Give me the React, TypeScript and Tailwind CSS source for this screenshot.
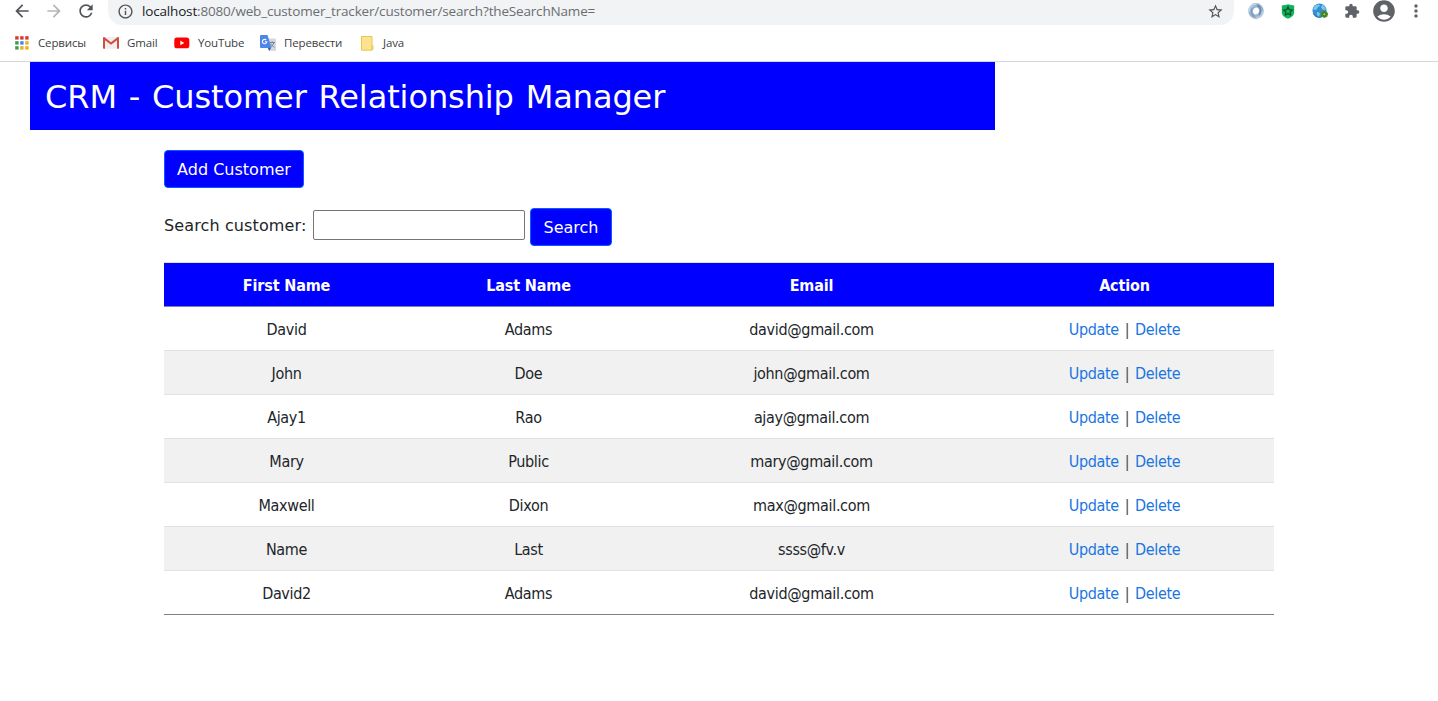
import type { ReactNode } from "react";
import { MdArrowBack, MdArrowForward, MdRefresh, MdInfoOutline, MdStarBorder, MdExtension, MdAccountCircle, MdMoreVert } from "react-icons/md";

type Customer = { first: string; last: string; email: string };

const customers: Customer[] = [
  { first: "David", last: "Adams", email: "david@gmail.com" },
  { first: "John", last: "Doe", email: "john@gmail.com" },
  { first: "Ajay1", last: "Rao", email: "ajay@gmail.com" },
  { first: "Mary", last: "Public", email: "mary@gmail.com" },
  { first: "Maxwell", last: "Dixon", email: "max@gmail.com" },
  { first: "Name", last: "Last", email: "ssss@fv.v" },
  { first: "David2", last: "Adams", email: "david@gmail.com" },
];

function AppsIcon() {
  const colors = ["#d93a34", "#d93a34", "#d93a34", "#34a04f", "#4285f4", "#e9b120", "#34a04f", "#e9b120", "#e9b120"];
  return (
    <svg width="14" height="14" viewBox="0 0 14 14" className="-ml-px">
      {colors.map((c, i) => (
        <rect key={i} x={0.2 + (i % 3) * 5} y={0.2 + Math.floor(i / 3) * 5} width="3.4" height="3.4" fill={c} />
      ))}
    </svg>
  );
}

function GmailIcon() {
  return (
    <svg width="16" height="12" viewBox="0 0 16 12">
      <path d="M1 0h14a1 1 0 0 1 1 1v10a.8.8 0 0 1-.8.8H.8A.8.8 0 0 1 0 11V1a1 1 0 0 1 1-1z" fill="#efefef" />
      <path d="M0 1.2C0 .5.5 0 1.2 0L8 5.300 14.800 0c.7 0 1.200.5 1.200 1.200V11c0 .5-.3.800-.8.800H14V3.200L8 7.800 2 3.200v8.600H.8c-.5 0-.8-.3-.8-.8z" fill="#d54b3d" />
    </svg>
  );
}

function YouTubeIcon() {
  return (
    <svg width="16" height="12" viewBox="0 0 16 12">
      <rect x="0.300" y="0.500" width="15" height="10.800" rx="2.600" fill="#f00" />
      <path d="M6.300 3.600v4.600L10.300 5.900z" fill="#fff" />
    </svg>
  );
}

function TranslateIcon() {
  return (
    <svg width="16" height="16" viewBox="0 0 16 16">
      <path d="M6 3.500h9a1 1 0 0 1 1 1V15a1 1 0 0 1-1 1H9z" fill="#d5d8dc" />
      <path d="M9.500 7.500h5.500M12.200 6.300v1.200M13.800 7.700c-.5 2-2 3.600-3.600 4.400M10.800 8.500c.6 1.600 2 3 3.600 3.700" stroke="#6f7d8c" strokeWidth="0.900" fill="none" />
      <path d="M8 13h3.200L9 16z" fill="#3759a8" />
      <path d="M1 0h6.500L11.500 13H1a1 1 0 0 1-1-1V1a1 1 0 0 1 1-1z" fill="#4b86e8" />
      <path d="M6.200 5A2.200 2.200 0 1 0 6.800 6.700H4.800" stroke="#fff" strokeWidth="1.100" fill="none" />
    </svg>
  );
}

function FolderIcon() {
  return (
    <svg width="13" height="15" viewBox="0 0 13 15">
      <path d="M.5.500h10.500V9.500h1V13l-.8 1.200H.5z" fill="#fde391" stroke="#e6c84f" strokeWidth="1" />
      <path d="M10.500 10v3.500" stroke="#e6c84f" strokeWidth="0.800" />
    </svg>
  );
}

function RingIcon() {
  return (
    <svg width="16" height="16" viewBox="0 0 16 16">
      <ellipse cx="8" cy="8" rx="5.400" ry="5.500" fill="none" stroke="#9db5cf" strokeWidth="4.800" />
      <path d="M1.200 9C.8 4 4 1.200 8.500 1" fill="none" stroke="#c3d3e4" strokeWidth="1.600" />
      <path d="M9 2.200c4 1 4.800 6 2 9.800" fill="none" stroke="#6788ae" strokeWidth="1.500" />
      <path d="M7 13.600C3.500 12.600 2.500 8.500 4.300 5.300" fill="none" stroke="#7c9abc" strokeWidth="1.300" />
      <path d="M14.700 8c0 4-3 6.500-6.500 6.800" fill="none" stroke="#bfd0e3" strokeWidth="1.400" />
      <ellipse cx="8" cy="8" rx="2.400" ry="3.500" transform="rotate(18 8 8)" fill="#fff" />
    </svg>
  );
}

function ShieldIcon() {
  return (
    <svg width="14" height="15" viewBox="0 0 14 15">
      <path d="M.8 1.500C3 1.500 5 1 7 .300c2 .7 4 1.200 6.200 1.200v7c0 3-3 5-6.200 6.200C3.800 13.500.8 11.500.8 8.500z" fill="#12b45b" />
      <path d="M7 3l1.300 2.700 2.900.4-2.100 2 .5 2.900L7 9.600 4.400 11l.5-2.900-2.100-2 2.900-.4z" fill="none" stroke="#0b4f2b" strokeWidth="1.200" />
    </svg>
  );
}

function GlobeIcon() {
  return (
    <svg width="17" height="16" viewBox="0 0 17 16">
      <circle cx="7.500" cy="7.500" r="7" fill="#2f8fd0" />
      <path d="M2 4C4 .8 7 1 8 2.500 7 4 5.500 4 5 6 4 7.500 2 7 1 6zM10 1.500c2 1 3.500 2.500 4 5L11 7 9 4.500zM5 9l3 1-1 4C5 13.500 4.500 11 5 9z" fill="#7cc6ea" />
      <path d="M1.300 10.500C3 14 7 15 9.500 14" fill="none" stroke="#1c5f9d" strokeWidth="1" />
      <path d="M8.500 10l2-2.500 4 .7 1.700 2.600-1 3-3 1.200-3-1.500z" fill="#4d8f2c" />
      <circle cx="12.300" cy="11.300" r="1.600" fill="#a9cf6a" stroke="#2f6a1d" strokeWidth="1" />
    </svg>
  );
}

function Bookmark({ icon, label, className }: { icon: ReactNode; label: string; className: string }) {
  return (
    <div className={`flex shrink-0 items-center ${className}`}>
      <span className="flex w-4 shrink-0 items-center justify-center">{icon}</span>
      <span className="ml-2 whitespace-nowrap tracking-[-0.15px]">{label}</span>
    </div>
  );
}

function BrowserBar() {
  return (
    <header className="h-[62px] border-b border-[#d5d8dc] bg-white font-['Open_Sans',sans-serif]">
      <div className="flex h-[25px] items-start">
        <div className="flex h-[22px] w-[108px] shrink-0 items-center gap-3 pl-3 text-[20px] text-[#505459]">
          <MdArrowBack />
          <MdArrowForward className="text-[#b4b6b8]" />
          <MdRefresh />
        </div>
        <div className="flex h-[25px] w-[1126px] shrink-0 items-start rounded-b-[14px] bg-[#f1f3f4]">
          <div className="flex h-[22px] w-full items-center pl-[9px] pr-[10px]">
            <MdInfoOutline className="text-[17px] text-[#505459]" />
            <span className="ml-2 whitespace-nowrap text-[13.5px] tracking-[-0.17px] text-[#6a6e73]">
              <span className="text-[#202124]">localhost</span>:8080/web_customer_tracker/customer/search?theSearchName=
            </span>
            <MdStarBorder className="ml-auto text-[17px] text-[#505459]" />
          </div>
        </div>
        <div className="flex h-[22px] items-center pl-[14px] text-[#5f6368]">
          <RingIcon />
          <span className="ml-[17px] pt-px"><ShieldIcon /></span>
          <span className="ml-[17px]"><GlobeIcon /></span>
          <MdExtension className="ml-[15px] text-[16px]" />
          <MdAccountCircle className="ml-[11px] text-[26px]" />
          <MdMoreVert className="ml-[9px] text-[20px]" />
        </div>
      </div>
      <nav className="flex h-[36px] items-center pl-[14px] text-[11.5px] text-[#3c4043]">
        <Bookmark icon={<AppsIcon />} label="Сервисы" className="w-[89px]" />
        <Bookmark icon={<GmailIcon />} label="Gmail" className="w-[71px]" />
        <Bookmark icon={<YouTubeIcon />} label="YouTube" className="w-[86px]" />
        <Bookmark icon={<TranslateIcon />} label="Перевести" className="w-[99px]" />
        <Bookmark icon={<FolderIcon />} label="Java" className="w-[60px]" />
      </nav>
    </header>
  );
}

export default function App() {
  return (
    <div className="h-[701px] overflow-hidden bg-white font-['DejaVu_Sans',sans-serif] text-base text-[#212529]">
      <BrowserBar />
      <div className="ml-[30px] flex h-[68px] w-[965px] items-center bg-[#0000ff] px-[15px] pt-0.5">
        <h1 className="text-[32px] leading-[38px] tracking-[-0.1px] [word-spacing:1.8px] text-white">CRM - Customer Relationship Manager</h1>
      </div>
      <main className="mx-auto w-[1110px] pt-5">
        <button className="flex h-[38px] w-[140px] items-center justify-center rounded border border-[#0060ff] bg-[#0000ff] pt-0.5 text-white">
          Add Customer
        </button>
        <form className="mt-5 flex items-start">
          <label htmlFor="search" className="w-[149px] pt-[6px] leading-6 tracking-[0.12px]">Search customer:</label>
          <input id="search" type="text" className="mt-[2px] h-[30px] w-[212px] rounded-[2px] border border-[#767676] bg-white px-1 outline-none" />
          <button type="button" className="ml-[5px] h-[38px] w-[82px] rounded border border-[#0060ff] bg-[#0000ff] pt-0.5 text-white">
            Search
          </button>
        </form>
        <table className="mt-4 w-full table-fixed border-collapse border-b border-[#808080] text-center font-['DejaVu_Sans_Condensed','DejaVu_Sans',sans-serif] tracking-[-0.33px] [font-stretch:condensed]">
          <colgroup>
            <col className="w-[245px]" />
            <col className="w-[239px]" />
            <col className="w-[327px]" />
            <col className="w-[299px]" />
          </colgroup>
          <thead>
            <tr className="h-[44px] border-t border-b border-t-[#dee2e6] border-b-[#8080c0] bg-[#0000ff] tracking-[-0.15px] text-white">
              <th className="pt-0.5">First Name</th>
              <th className="pt-0.5">Last Name</th>
              <th className="pt-0.5">Email</th>
              <th className="pt-0.5">Action</th>
            </tr>
          </thead>
          <tbody>
            {customers.map((c) => (
              <tr key={c.first} className="h-[44px] border-t border-[#dee2e6] even:bg-[#f1f1f1] first:border-t-[#8080c0]">
                <td className="pt-0.5">{c.first}</td>
                <td className="pt-0.5">{c.last}</td>
                <td className="pt-0.5">{c.email}</td>
                <td className="pt-0.5">
                  <a href="#" className="text-[#1a75e0]">Update</a>
                  <span className="mx-[1.5px] text-[#4a4d50]"> | </span>
                  <a href="#" className="text-[#1a75e0]">Delete</a>
                </td>
              </tr>
            ))}
          </tbody>
        </table>
      </main>
    </div>
  );
}
